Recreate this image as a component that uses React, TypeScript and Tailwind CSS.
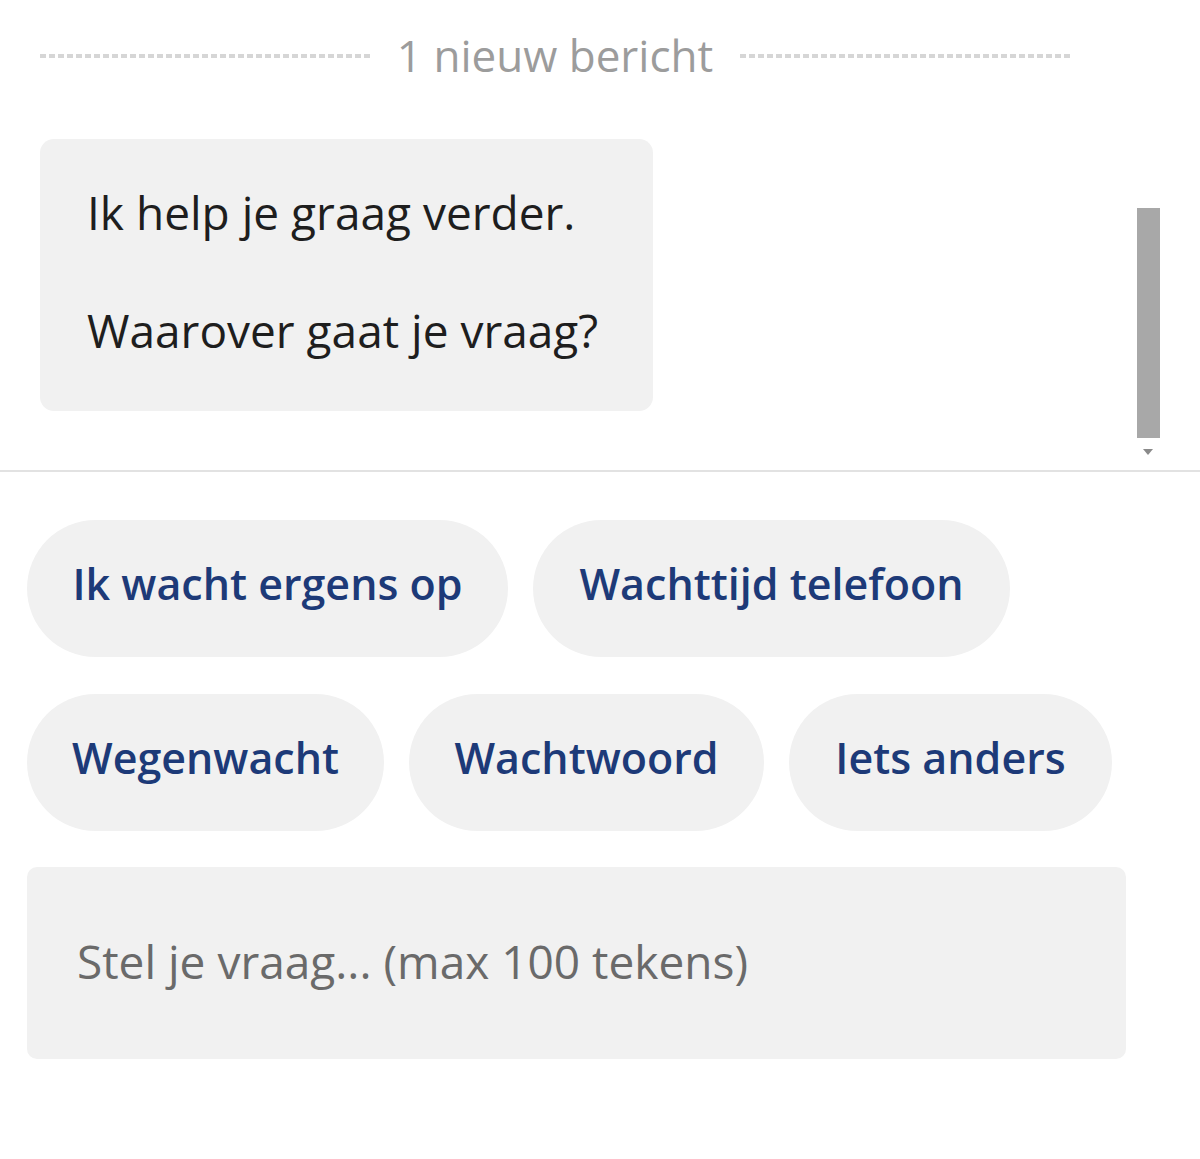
import React from "react";

const font = { fontFamily: "'Open Sans', 'Noto Sans', sans-serif" };

function Chip({ label, w }: { label: string; w: string }) {
  return (
    <div
      className={`h-[137px] ${w} rounded-full bg-[#f1f1f1] flex items-center justify-center pb-[8px] text-[43px] font-semibold text-[#1d3a78] whitespace-nowrap`}
    >
      {label}
    </div>
  );
}

export default function App() {
  return (
    <div className="w-[1200px] h-[1159px] bg-white overflow-hidden relative" style={font}>
      <div className="relative h-[472px] border-b-2 border-[#e2e2e2]">
        <div className="flex items-center pl-[40px] pr-[130px] pt-[28px] h-[56px] box-content">
          <div className="flex-1 h-[4px] bg-[repeating-linear-gradient(90deg,#d6d6d6_0_6px,transparent_6px_9px)]" />
          <div className="px-[27px] text-[44px] text-[#9c9c9c] leading-none whitespace-nowrap pb-[2px]">
            1 nieuw bericht
          </div>
          <div className="flex-1 h-[4px] bg-[repeating-linear-gradient(90deg,#d6d6d6_0_6px,transparent_6px_9px)]" />
        </div>
        <div className="ml-[40px] mt-[55px] w-[613px] h-[272px] rounded-[14px] bg-[#f1f1f1] pl-[47px] pt-[44px] text-[46px] leading-[59px] text-[#1e1e1e]">
          <div>Ik help je graag verder.</div>
          <div>&nbsp;</div>
          <div>Waarover gaat je vraag?</div>
        </div>
        <div className="absolute left-[1137px] top-[208px] w-[23px] h-[230px] bg-[#a8a8a8]" />
        <svg className="absolute left-[1142px] top-[448px]" width="12" height="8" viewBox="0 0 12 8">
          <path d="M1 1 L11 1 L6 7 Z" fill="#8a8a8a" />
        </svg>
      </div>
      <div className="px-[27px] pt-[48px]">
        <div className="flex flex-wrap gap-x-[25px] gap-y-[37px] w-[1120px]">
          <Chip label="Ik wacht ergens op" w="w-[481px]" />
          <Chip label="Wachttijd telefoon" w="w-[477px]" />
          <Chip label="Wegenwacht" w="w-[357px]" />
          <Chip label="Wachtwoord" w="w-[355px]" />
          <Chip label="Iets anders" w="w-[323px]" />
        </div>
        <div className="mt-[36px] w-[1099px] h-[192px] rounded-[10px] bg-[#f1f1f1] flex items-center pl-[50px] pb-[4px] text-[46px] text-[#6a6a6a]">
          Stel je vraag... (max 100 tekens)
        </div>
      </div>
    </div>
  );
}
